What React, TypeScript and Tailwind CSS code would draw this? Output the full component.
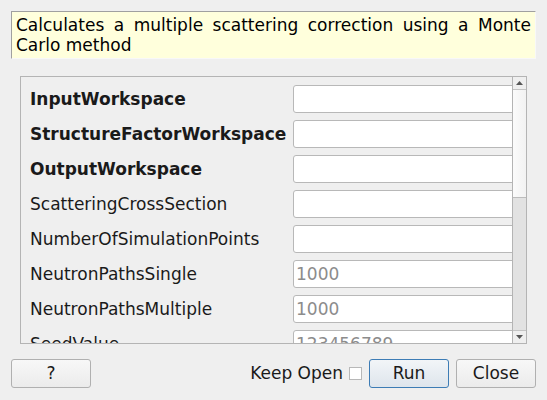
const fields = [
  { label: 'InputWorkspace', bold: true, value: '' },
  { label: 'StructureFactorWorkspace', bold: true, value: '' },
  { label: 'OutputWorkspace', bold: true, value: '' },
  { label: 'ScatteringCrossSection', bold: false, value: '' },
  { label: 'NumberOfSimulationPoints', bold: false, value: '' },
  { label: 'NeutronPathsSingle', bold: false, value: '1000' },
  { label: 'NeutronPathsMultiple', bold: false, value: '1000' },
  { label: 'SeedValue', bold: false, value: '123456789' },
];

const ArrowUp = () => (
  <svg width="7" height="4" viewBox="0 0 7 4">
    <path d="M0 4 L3.5 0 L7 4 Z" fill="#555" />
  </svg>
);

const ArrowDown = () => (
  <svg width="7" height="4" viewBox="0 0 7 4">
    <path d="M0 0 L3.5 4 L7 0 Z" fill="#555" />
  </svg>
);

const App = () => {
  return (
    <div className="w-[547px] h-[400px] bg-[#efefef] text-[17px] text-[#1a1a1a] font-['DejaVu_Sans',sans-serif] overflow-hidden flex flex-col">
      <div className="mt-[11px] mx-[11px] h-[48px] bg-[#ffffdc] border-t border-l border-t-[#a0a0a0] border-l-[#a0a0a0] border-r border-b border-r-[#f8f8f8] border-b-[#f8f8f8] px-[4px] pt-[3px] leading-[20px] text-justify text-black">
        Calculates a multiple scattering correction using a Monte Carlo method
      </div>

      <div className="mt-[17px] ml-[20px] w-[507px] h-[268px] border border-[#b4b4b4] flex">
        <div className="flex-1 overflow-hidden">
          <div className="pt-[8px] pl-[9px] flex flex-col gap-[7px]">
            {fields.map((f) => (
              <div key={f.label} className="flex items-center h-[28px]">
                <div className={`w-[263px] shrink-0 pt-[2px] ${f.bold ? 'font-bold' : ''}`}>{f.label}</div>
                <div className="shrink-0 w-[240px] h-[28px] bg-white border border-[#b8b8b8] rounded-[3px] flex items-center pl-[2px] pt-[2px] text-[#8c8c8c]">
                  {f.value}
                </div>
              </div>
            ))}
          </div>
        </div>
        <div className="w-[14px] shrink-0 border-l border-[#b4b4b4] flex flex-col">
          <div className="h-[13px] flex items-center justify-center bg-[#efefef] border-b border-[#c4c4c4]">
            <ArrowUp />
          </div>
          <div className="h-[108px] bg-gradient-to-r from-[#fbfbfb] to-[#f2f2f2] border-b border-[#bcbcbc]" />
          <div className="flex-1 bg-[#e2e2e2]" />
          <div className="h-[13px] flex items-center justify-center bg-[#efefef] border-t border-[#c4c4c4]">
            <ArrowDown />
          </div>
        </div>
      </div>

      <div className="mt-[15px] mx-[11px] flex items-center h-[29px]">
        <button className="w-[80px] h-[29px] border border-[#b0b0b0] rounded-[3px] bg-gradient-to-b from-[#f8f8f8] to-[#ebebeb]">
          ?
        </button>
        <div className="flex-1" />
        <span>Keep Open</span>
        <span className="ml-[6px] w-[13px] h-[13px] bg-white border border-[#b8b8b8]" />
        <button className="ml-[7px] w-[80px] h-[29px] border border-[#3d7cb5] rounded-[3px] bg-gradient-to-b from-[#f2f5f8] to-[#dee5ec]">
          Run
        </button>
        <button className="ml-[7px] w-[80px] h-[29px] border border-[#b0b0b0] rounded-[3px] bg-gradient-to-b from-[#f8f8f8] to-[#ebebeb]">
          Close
        </button>
      </div>
    </div>
  );
};

export default App;
